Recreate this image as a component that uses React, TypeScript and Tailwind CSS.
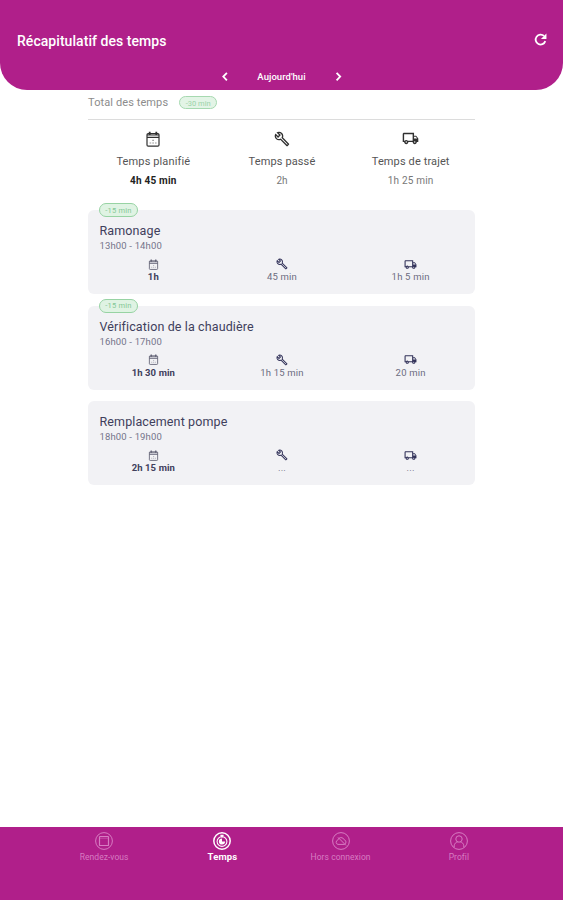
import React from 'react';
import { MdOutlineBuild, MdOutlineLocalShipping } from 'react-icons/md';

interface IconProps {
  size: number;
}

interface Job {
  title: string;
  hours: string;
  delta?: string;
  planned: string;
  spent: string;
  travel: string;
}

const jobs: Job[] = [
  { title: 'Ramonage', hours: '13h00 - 14h00', delta: '-15 min', planned: '1h', spent: '45 min', travel: '1h 5 min' },
  { title: 'Vérification de la chaudière', hours: '16h00 - 17h00', delta: '-15 min', planned: '1h 30 min', spent: '1h 15 min', travel: '20 min' },
  { title: 'Remplacement pompe', hours: '18h00 - 19h00', planned: '2h 15 min', spent: '...', travel: '...' },
];

const CalendarIcon: React.FC<IconProps> = ({ size }) => (
  <svg width={size} height={size} viewBox="0 0 16 16" fill="none" stroke="currentColor" strokeWidth="1.2">
    <rect x="2" y="2.6" width="12" height="12.6" rx="1.2" />
    <path d="M2 4h12M2 6.4h12" />
    <path d="M4.7 0.8v3.2M11.3 0.8v3.2" strokeWidth="1.8" />
    <path d="M4.6 12h1.6M7.3 12h1.6M10 12h1.6M7.3 9.4h1.6" strokeWidth="1.1" opacity="0.5" />
  </svg>
);

const ChevronLeft = () => (
  <svg width="15" height="15" viewBox="0 0 15 15" fill="none" stroke="currentColor" strokeWidth="1.8">
    <path d="M9.9 2.9L6.3 6.6l3.6 3.7" />
  </svg>
);

const ChevronRight = () => (
  <svg width="15" height="15" viewBox="0 0 15 15" fill="none" stroke="currentColor" strokeWidth="1.8">
    <path d="M5.6 2.9l3.6 3.7-3.6 3.7" />
  </svg>
);

const RefreshIcon = () => (
  <svg width="17" height="17" viewBox="0 0 24 24" fill="none" stroke="currentColor" strokeWidth="2.5" className="-mt-[3px]">
    <path d="M18.8 14.3A7 7 0 1 1 17 7" />
    <path d="M20.4 3.4v7.8h-7.8z" fill="currentColor" stroke="none" />
  </svg>
);

const SquareIcon = () => (
  <svg width="18" height="18" viewBox="0 0 18 18" fill="none" stroke="currentColor">
    <circle cx="9" cy="9" r="8.4" />
    <rect x="4.5" y="4.5" width="9" height="9" rx="0.6" strokeWidth="1.2" />
    <path d="M4.5 6.2h9" strokeWidth="0.5" />
  </svg>
);

const StopwatchIcon = () => (
  <svg width="18" height="18" viewBox="0 0 18 18" fill="none" stroke="currentColor">
    <circle cx="9" cy="9" r="8.2" strokeWidth="1.5" />
    <circle cx="9" cy="9.5" r="4.9" strokeWidth="1.1" />
    <path d="M7.4 3.4h3.2M9 3.4v2" strokeWidth="1.4" />
    <path d="M9 6.4v3.2h3.1a3.1 3.1 0 1 1-3.1-3.2z" fill="currentColor" stroke="none" />
  </svg>
);

const OfflineIcon = () => (
  <svg width="18" height="18" viewBox="0 0 18 18" fill="none" stroke="currentColor">
    <circle cx="9" cy="9" r="8.4" />
    <path d="M6 12.4a2.2 2.2 0 0 1-.2-4.3 3.3 3.3 0 0 1 6.3-.4 2.5 2.5 0 0 1 .4 4.7z" />
    <path d="M6 5.4l8 8" />
  </svg>
);

const ProfileIcon = () => (
  <svg width="18" height="18" viewBox="0 0 18 18" fill="none" stroke="currentColor">
    <circle cx="9" cy="9" r="8.4" />
    <circle cx="9" cy="7" r="3.2" />
    <path d="M4.2 15.2v-1.4c0-2.2 1.8-3.6 3.4-3.8M13.8 15.2v-1.4c0-2.2-1.8-3.6-3.4-3.8" />
  </svg>
);

const tabs = [
  { label: 'Rendez-vous', icon: <SquareIcon />, active: false },
  { label: 'Temps', icon: <StopwatchIcon />, active: true },
  { label: 'Hors connexion', icon: <OfflineIcon />, active: false },
  { label: 'Profil', icon: <ProfileIcon />, active: false },
];

const JobCard: React.FC<{ job: Job }> = ({ job }) => (
  <div className="relative h-[84px] rounded-md bg-[#f2f2f5] pt-[13px] text-[#40405c]">
    {job.delta && (
      <span className="absolute -top-[7px] left-[11px] flex h-[14px] w-[39px] items-center justify-center rounded-full border border-[#97d3a3] bg-[#dff3e3] pt-px text-[7.5px] tracking-[0.2px] text-[#84c795]">
        {job.delta}
      </span>
    )}
    <h2 className="pl-[11.5px] text-[12.5px] leading-[16px] tracking-[0.12px]">{job.title}</h2>
    <p className="pl-[11.5px] text-[9.5px] leading-[13px] tracking-[0.15px] text-[#74748a]">{job.hours}</p>
    <div className="mt-[6px] grid grid-cols-3 pl-px text-[9.5px] leading-[13px] tracking-[0.2px] text-[#6c6c80]">
      <div className="flex flex-col items-center">
        <div className="flex h-3 items-center text-[#5c5c70]"><CalendarIcon size={11} /></div>
        <span className="font-bold tracking-[0.1px] text-[#40405c]">{job.planned}</span>
      </div>
      <div className="flex flex-col items-center">
        <div className="flex h-3 items-center text-[#33335a]"><MdOutlineBuild size={12} /></div>
        <span>{job.spent}</span>
      </div>
      <div className="flex flex-col items-center">
        <div className="flex h-3 items-center text-[#33335a]"><MdOutlineLocalShipping size={13} /></div>
        <span>{job.travel}</span>
      </div>
    </div>
  </div>
);

const App: React.FC = () => {
  return (
    <div className="flex h-[900px] w-[563px] flex-col overflow-hidden bg-white font-['Roboto',sans-serif]">
      {/* Header */}
      <header className="h-[90px] shrink-0 rounded-b-[27px] bg-[#b01f8a] text-white">
        <div className="flex items-center justify-between pt-[31px] pr-[14px] pl-[17px]">
          <h1 className="text-[14px] leading-[20px] font-medium tracking-[0.05px]">Récapitulatif des temps</h1>
          <RefreshIcon />
        </div>
        <div className="mt-[18px] flex h-4 items-center justify-center">
          <ChevronLeft />
          <span className="w-[99px] text-center text-[9.5px] font-medium tracking-[0.05px]">Aujourd'hui</span>
          <ChevronRight />
        </div>
      </header>

      <main className="mx-auto w-[387px] flex-1">
        {/* Totals */}
        <div className="flex h-[29.5px] items-center border-b border-[#dcdcdc] pb-[3px]">
          <span className="text-[11px] tracking-[0.1px] text-[#8c8c8c]">Total des temps</span>
          <span className="ml-[11px] flex h-[13px] w-[38px] items-center justify-center rounded-full border border-[#a6d9b0] bg-[#e3f4e6] pt-px text-[7.5px] text-[#9bd3a8]">
            -30 min
          </span>
        </div>
        <div className="grid grid-cols-3 pt-[10px] pl-px text-[11px] text-[#555555]">
          <div className="flex flex-col items-center">
            <div className="flex h-[18px] items-center text-[#303030]"><CalendarIcon size={16} /></div>
            <span className="mt-[6px] leading-[16px] tracking-[0.12px]">Temps planifié</span>
            <span className="mt-1 text-[10px] leading-[14px] font-bold tracking-[0.2px] text-[#222222]">4h 45 min</span>
          </div>
          <div className="flex flex-col items-center">
            <div className="flex h-[18px] items-center text-[#303030]"><MdOutlineBuild size={16} /></div>
            <span className="mt-[6px] leading-[16px] tracking-[0.12px]">Temps passé</span>
            <span className="mt-1 text-[10px] leading-[14px] text-[#777777]">2h</span>
          </div>
          <div className="flex flex-col items-center">
            <div className="flex h-[18px] items-center text-[#303030]"><MdOutlineLocalShipping size={17} /></div>
            <span className="mt-[6px] leading-[16px] tracking-[0.12px]">Temps de trajet</span>
            <span className="mt-1 text-[10px] leading-[14px] tracking-[0.2px] text-[#777777]">1h 25 min</span>
          </div>
        </div>

        {/* Jobs */}
        <div className="mt-[22.5px] flex flex-col gap-[11.5px]">
          {jobs.map((job) => (
            <JobCard key={job.title} job={job} />
          ))}
        </div>
      </main>

      {/* Bottom navigation */}
      <nav className="h-[73px] shrink-0 bg-[#b01f8a] px-[45px] pt-[5px]">
        <div className="grid grid-cols-4">
          {tabs.map((tab) => (
            <div key={tab.label} className={`flex flex-col items-center ${tab.active ? 'text-white' : 'text-[#d77cc2]'}`}>
              {tab.icon}
              <span className={`mt-px leading-[12px] ${tab.active ? 'text-[9.5px] font-bold tracking-[0.1px]' : 'text-[8.5px] tracking-[0.05px]'}`}>{tab.label}</span>
            </div>
          ))}
        </div>
      </nav>
    </div>
  );
};

export default App;
